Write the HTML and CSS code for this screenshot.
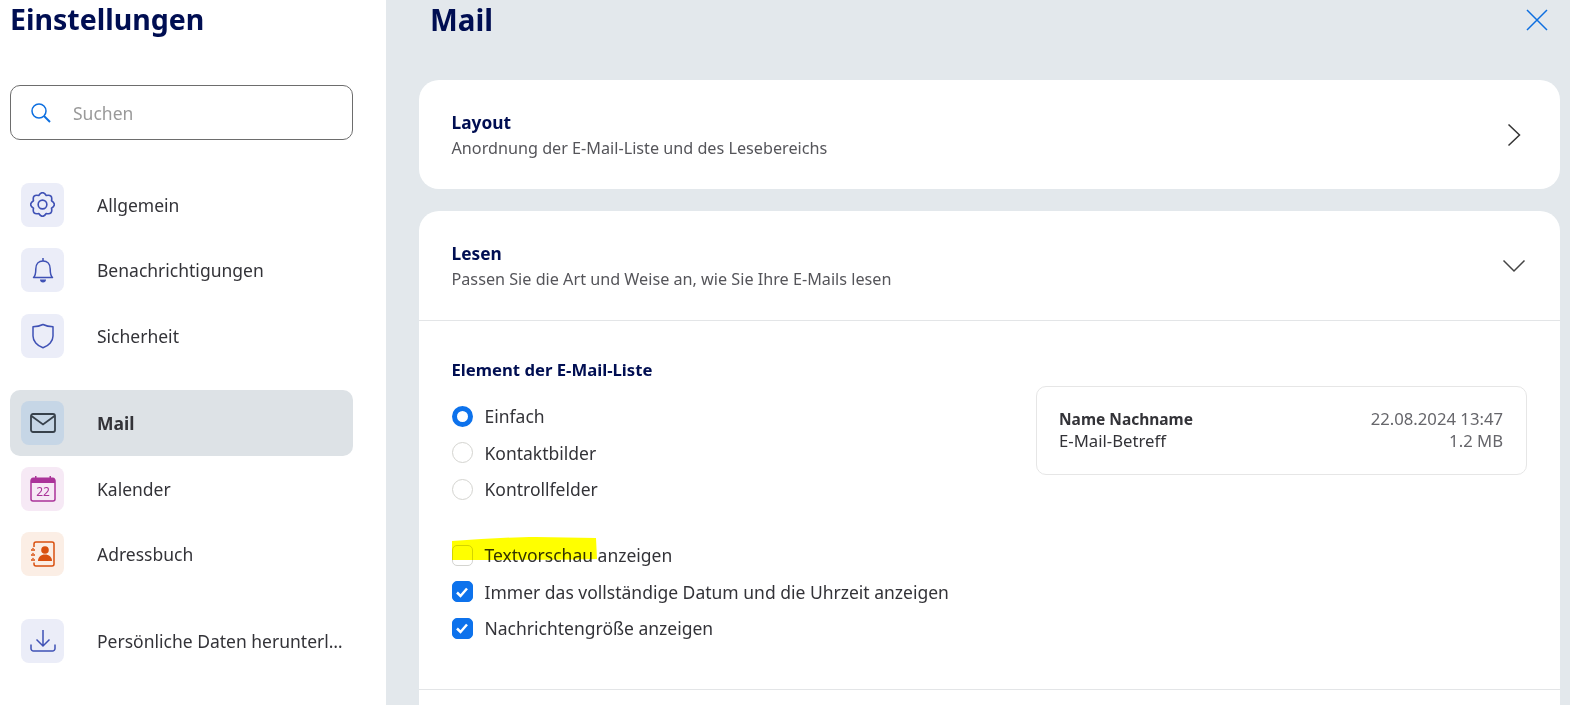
FILE: index.html
```html
<!DOCTYPE html>
<html lang="de">
<head>
<meta charset="utf-8">
<title>Einstellungen</title>
<link rel="stylesheet" href="styles.css">
</head>
<body>
<div class="app">
  <aside class="sidebar">
    <h1 class="side-title">Einstellungen</h1>
    <div class="search">
      <svg class="search-icon" viewBox="0 0 20 20" width="20" height="20"><circle cx="8" cy="8" r="7"/><path class="thick" d="M13 13l6 6"/></svg>
      <span class="search-ph">Suchen</span>
    </div>
    <nav class="nav">
      <div class="nav-group">
        <a class="nav-item"><span class="nav-icon tint-blue">
          <svg viewBox="0.500 0.500 23 23" width="25" height="25" class="ic-blue"><circle cx="12" cy="12" r="4"/><path d="M20.310 8.560Q25.500 12 20.310 15.440Q21.550 21.550 15.440 20.310Q12 25.500 8.560 20.310Q2.450 21.550 3.690 15.440Q-1.500 12 3.690 8.560Q2.450 2.450 8.560 3.690Q12 -1.500 15.440 3.690Q21.550 2.450 20.310 8.560z" stroke-linejoin="round"/></svg>
        </span><span class="nav-label">Allgemein</span></a>
        <a class="nav-item"><span class="nav-icon tint-blue">
          <svg viewBox="0 0 22 26" width="22" height="26" class="ic-blue"><path d="M1.500 20.500c1.800-1.500 2.300-4 2.300-8.500 0-5 3-8 7.200-8s7.200 3 7.200 8c0 4.500.5 7 2.300 8.500z" stroke-linejoin="round"/><path d="M11 1v3"/><path class="fill" d="M8 22.500h6c0 1.800-1.200 3-3 3s-3-1.200-3-3z"/></svg>
        </span><span class="nav-label">Benachrichtigungen</span></a>
        <a class="nav-item"><span class="nav-icon tint-blue">
          <svg viewBox="0 0 24 26" width="24" height="26" class="ic-blue"><path d="M12 1.500c3 1.500 6.500 2.200 10 2.300v9.200c0 5-4 9.800-10 11.800-6-2-10-6.800-10-11.800V3.800c3.500-.1 7-.8 10-2.300z" stroke-linejoin="round"/></svg>
        </span><span class="nav-label">Sicherheit</span></a>
      </div>
      <div class="nav-group">
        <a class="nav-item is-active"><span class="nav-icon tint-active">
          <svg viewBox="0 0 26 20" width="26" height="20" class="ic-dark"><rect x="1" y="1" width="24" height="18" rx="2"/><path d="M1.500 3L13 11.500 24.500 3"/></svg>
        </span><span class="nav-label">Mail</span></a>
        <a class="nav-item"><span class="nav-icon tint-pink">
          <svg viewBox="0 0 26 26" width="26" height="26" class="ic-pink"><rect x="1" y="3" width="24" height="22" rx="2"/><path class="fill" d="M1 3.500a2 2 0 0 1 2-2h2V0h1.500v1.500h13V0H21v1.500h2a2 2 0 0 1 2 2V7H1z"/><text x="13" y="20" class="cal-num">22</text></svg>
        </span><span class="nav-label">Kalender</span></a>
        <a class="nav-item"><span class="nav-icon tint-orange">
          <svg viewBox="0 0 24 26" width="24" height="26" class="ic-orange"><path d="M3 6V3a2 2 0 0 1 2-2h16a2 2 0 0 1 2 2v20a2 2 0 0 1-2 2H5a2 2 0 0 1-2-2v-1.500"/><path d="M0 9h4M0 14h4M0 19h4"/><path class="fill" d="M1 8l1-1.500L3 8zM1 13l1-1.500L3 13zM1 18l1-1.500L3 18z"/><circle class="fill" cx="14" cy="9" r="3.800"/><path class="fill" d="M7 20c0-4 3-6.500 7-6.500s7 2.500 7 6.500z"/></svg>
        </span><span class="nav-label">Adressbuch</span></a>
      </div>
      <div class="nav-group">
        <a class="nav-item"><span class="nav-icon tint-blue">
          <svg viewBox="0 0 26 22" width="26" height="22" class="ic-blue"><path d="M13 0v16M6.500 9.500L13 16l6.500-6.500"/><path d="M1 14.500v4a2.500 2.500 0 0 0 2.500 2.500h19a2.500 2.500 0 0 0 2.500-2.500v-4"/></svg>
        </span><span class="nav-label">Persönliche Daten herunterl…</span></a>
      </div>
    </nav>
  </aside>
  <main class="main">
    <header class="main-head">
      <h2 class="main-title">Mail</h2>
      <svg class="close" viewBox="0 0 22 22" width="22" height="22"><path d="M1 1l20 20M21 1L1 21"/></svg>
    </header>
    <section class="card">
      <div class="card-head">
        <div>
          <div class="card-title">Layout</div>
          <div class="card-sub">Anordnung der E-Mail-Liste und des Lesebereichs</div>
        </div>
        <svg class="chev-right" viewBox="0 0 14 24" width="14" height="24"><path d="M1.500 1.500L12.500 12 1.500 22.500"/></svg>
      </div>
    </section>
    <section class="card card-open">
      <div class="card-head">
        <div>
          <div class="card-title">Lesen</div>
          <div class="card-sub">Passen Sie die Art und Weise an, wie Sie Ihre E-Mails lesen</div>
        </div>
        <svg class="chev-down" viewBox="0 0 24 14" width="24" height="14"><path d="M1.500 1.500L12 12 22.500 1.500"/></svg>
      </div>
      <div class="card-body">
        <div class="options">
          <h3 class="group-title">Element der E-Mail-Liste</h3>
          <div class="radio-list">
            <label class="opt"><span class="radio is-on"></span>Einfach</label>
            <label class="opt"><span class="radio"></span>Kontaktbilder</label>
            <label class="opt"><span class="radio"></span>Kontrollfelder</label>
          </div>
          <div class="check-list">
            <label class="opt"><span class="check"></span>Textvorschau anzeigen</label>
            <label class="opt"><span class="check is-on"><svg viewBox="0 0 14 12" width="14" height="12"><path d="M2 6.500l3.500 3.500L12 2.500"/></svg></span>Immer das vollständige Datum und die Uhrzeit anzeigen</label>
            <label class="opt"><span class="check is-on"><svg viewBox="0 0 14 12" width="14" height="12"><path d="M2 6.500l3.500 3.500L12 2.500"/></svg></span>Nachrichtengröße anzeigen</label>
          </div>
        </div>
        <div class="preview">
          <div class="preview-row"><strong class="preview-name">Name Nachname</strong><span class="preview-meta">22.08.2024 13:47</span></div>
          <div class="preview-row"><span>E-Mail-Betreff</span><span class="preview-meta">1.2 MB</span></div>
        </div>
      </div>
    </section>
  </main>
</div>
<svg class="marker" viewBox="0 0 146 24" width="146" height="24"><path d="M1 4C30 2 60 0 85 0c20 0 40 1 60 1l1 21c-50 1-95 1-145 1z"/></svg>
</body>
</html>
```
FILE: styles.css
```css
* { box-sizing: border-box; }
html, body { margin: 0; height: 100%; overflow: hidden; }
body { font-family: "Noto Sans", "Open Sans", sans-serif; color: #333338; background: #e3e8ec; }
.app { display: flex; height: 705px; overflow: hidden; }
svg { display: block; fill: none; stroke-width: 1.5; }

.sidebar { width: 386px; flex: none; background: #fff; padding: 0 33px 0 10px; }
.side-title { margin: 0; height: 40px; line-height: 38px; font-size: 28.500px; font-weight: 700; color: #000e52; }
.search { margin-top: 45px; height: 55px; border: 1px solid #6d6d6d; border-radius: 10px; display: flex; align-items: center; padding-left: 20px; }
.search-icon { stroke: #0d6fe0; }
.search-icon .thick { stroke-width: 2; }
.search-ph { margin-left: 22px; font-size: 17.500px; color: #9a9a9a; }

.nav { margin-top: 32.300px; display: flex; flex-direction: column; gap: 22px; }
.nav-item { height: 65.400px; display: flex; align-items: center; padding-left: 11px; border-radius: 10px; }
.nav-item.is-active { background: #dde2e6; font-weight: 700; }
.nav-icon { width: 43px; height: 44px; flex: none; border-radius: 8px; display: flex; align-items: center; justify-content: center; }
.nav-label { margin-left: 33px; font-size: 17.500px; white-space: nowrap; }
.tint-blue { background: #ebedf8; }
.tint-active { background: #c6d6e6; }
.tint-pink { background: #f6e9f5; }
.tint-orange { background: #fbeee5; }
.ic-blue { stroke: #3f51b5; }
.ic-blue .fill { fill: #3f51b5; stroke: none; }
.ic-dark { stroke: #37414b; stroke-width: 1.800; }
.ic-pink { stroke: #aa3399; }
.ic-pink .fill { fill: #aa3399; stroke: none; }
.cal-num { font-size: 12px; fill: #aa3399; stroke: none; text-anchor: middle; font-family: "Noto Sans", sans-serif; }
.ic-orange { stroke: #d9500f; }
.ic-orange .fill { fill: #d9500f; stroke: none; }

.main { flex: 1; min-width: 0; padding: 0 10px 0 33px; display: flex; flex-direction: column; }
.main-head { flex: none; height: 80px; padding-left: 11px; display: flex; justify-content: space-between; align-items: flex-start; }
.main-title { margin: 0; height: 40px; line-height: 40px; font-size: 29.500px; font-weight: 700; color: #000e52; }
.close { stroke: #0d6fe0; margin-top: 9px; margin-right: 12px; }
.card { background: #fff; border-radius: 20px; margin-bottom: 22px; flex: none; }
.card-open { flex: 1; margin-bottom: 0; border-radius: 20px 20px 0 0; }
.card-head { height: 109px; padding: 30px 34.500px 0 32.500px; display: flex; justify-content: space-between; align-items: flex-start; }
.card-title { font-size: 17.300px; font-weight: 700; line-height: 25px; color: #000e52; }
.card-sub { font-size: 16.200px; line-height: 26px; color: #55555a; }
.chev-right { stroke: #333; margin: 13px 5px 0 0; }
.chev-down { stroke: #444; margin-top: 18px; margin-right: 0; }

.card-body { height: 370px; border-top: 1px solid #e3e5e7; border-bottom: 1px solid #e3e5e7; padding: 36px 32.500px 0; display: flex; justify-content: space-between; align-items: flex-start; }
.group-title { margin: 0 0 20px; font-size: 16.700px; line-height: 26px; font-weight: 700; color: #000e52; }
.radio-list, .check-list { display: flex; flex-direction: column; gap: 10.500px; }
.check-list { margin-top: 40px; }
.opt { height: 26px; display: flex; align-items: center; gap: 12px; font-size: 17.500px; }
.radio { width: 21px; height: 21px; border-radius: 50%; border: 1.500px solid #d4d4d0; background: #fff; flex: none; }
.radio.is-on { border: 5px solid #0d72ec; }
.check { width: 21px; height: 21px; border-radius: 5px; border: 1.500px solid #d4d4d0; background: #fff; flex: none; display: flex; align-items: center; justify-content: center; }
.check.is-on { background: #0d72ec; border-color: #0d72ec; }
.check svg { stroke: #fff; stroke-width: 2.500; }

.preview { width: 491px; height: 89px; margin-top: 29px; margin-right: 0.500px; border: 1px solid #e6e6e6; border-radius: 10px; padding: 21px 23px 0 22px; font-size: 16.700px; line-height: 22px; }
.preview-row { display: flex; justify-content: space-between; }
.preview-name { font-weight: 700; font-size: 15.500px; }
.preview-meta { color: #66666b; }

.marker { position: absolute; left: 451px; top: 537px; mix-blend-mode: multiply; }
.marker path { fill: #ffff00; }
```
